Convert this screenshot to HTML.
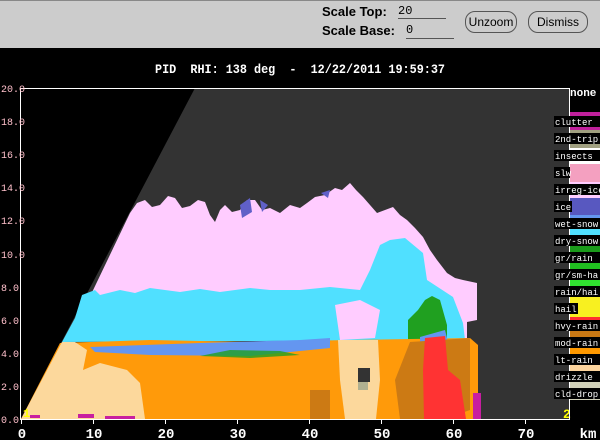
<!DOCTYPE html><html><head><style>
html,body{margin:0;padding:0;background:#000;width:600px;height:440px;overflow:hidden}
.tb{position:absolute;left:0;top:0;width:600px;height:47px;background:#cccccc;border-top:1px solid #888}
.lbl{position:absolute;font:bold 13px "Liberation Sans",sans-serif;color:#000}
.in{position:absolute;font:12px "Liberation Mono",monospace;color:#000;border-bottom:1px solid #555}
.btn{position:absolute;top:10px;height:20px;border:1px solid #555;border-radius:10px;font:12px "Liberation Sans",sans-serif;line-height:20px;text-align:center;background:#ccc}
</style></head><body>
<div class="tb">
<div class="lbl" style="left:322px;top:3px">Scale Top:</div>
<div class="in" style="left:398px;top:3px;width:48px;height:14px">20</div>
<div class="lbl" style="left:322px;top:22px">Scale Base:</div>
<div class="in" style="left:406px;top:22px;width:48px;height:15px">0</div>
<div class="btn" style="left:465px;width:50px">Unzoom</div>
<div class="btn" style="left:528px;width:58px">Dismiss</div>
</div>
<svg width="600" height="440" style="position:absolute;left:0;top:0" xmlns="http://www.w3.org/2000/svg">
<text x="155" y="73" fill="#fff" font-family="Liberation Mono,monospace" font-weight="bold" font-size="13" xml:space="preserve" textLength="290" lengthAdjust="spacingAndGlyphs">PID  RHI: 138 deg  -  12/22/2011 19:59:37</text>
<polygon points="195,88 569,88 569,419 21,419" fill="#333"/>
<polygon points="130,213 137,203 145,200 152,207 160,205 168,196 175,198 182,208 190,206 198,200 205,202 210,215 215,222 220,210 225,205 232,212 240,210 247,200 255,200 262,210 270,208 280,213 290,205 300,208 307,203 315,197 325,195 335,188 342,190 350,183 356,190 363,197 370,205 377,213 385,210 393,207 400,215 407,220 415,228 423,237 430,250 437,260 447,273 455,278 463,280 477,283 477,320 467,322 467,340 80,340 74,330" fill="#ffccff"/>
<polygon points="240,205 250,198 252,212 242,218" fill="#6060c8"/>
<polygon points="260,200 268,205 262,212" fill="#6060c8"/>
<polygon points="321,193 330,190 328,198" fill="#6060c8"/>
<polygon points="82,295 95,290 100,295 120,290 135,293 150,288 180,292 200,289 220,292 250,288 270,290 300,290 330,287 360,290 370,270 380,245 390,240 405,238 423,253 427,280 453,297 463,323 465,340 62,342 75,318" fill="#50e0ff"/>
<polygon points="335,305 360,300 380,310 375,338 340,340" fill="#ffccff"/>
<polygon points="408,320 418,310 425,300 432,296 440,300 447,325 447,340 408,342" fill="#20a020"/>
<polygon points="60,343 150,340 250,342 350,340 470,338 478,345 478,419 21,419" fill="#ff9a0a"/>
<polygon points="90,347 200,343 300,340 330,338 330,348 250,356 150,355 95,352" fill="#6496f0"/>
<polygon points="420,337 445,330 448,342 420,345" fill="#6496f0"/>
<polygon points="200,356 230,350 280,351 300,355 250,358" fill="#1fa01f" opacity=".8"/>
<polygon points="62,342 75,342 87,350 83,370 100,363 127,370 140,383 145,419 21,419" fill="#fcd89c"/>
<polygon points="338,340 378,340 380,380 376,419 345,419 340,380" fill="#fcd89c"/>
<rect x="358" y="368" width="12" height="14" fill="#333"/>
<rect x="358" y="382" width="10" height="8" fill="#b0b090"/>
<polygon points="410,342 470,338 470,410 445,419 400,419 395,380" fill="#cc7a14"/>
<rect x="310" y="390" width="20" height="29" fill="#cc7a14"/>
<polygon points="425,338 445,336 448,370 460,380 466,419 424,419 423,370" fill="#ff3333"/>
<rect x="473" y="393" width="8" height="26" fill="#c81ea0"/>
<rect x="30" y="415" width="10" height="3" fill="#c81ea0"/>
<rect x="78" y="414" width="16" height="4" fill="#c81ea0"/>
<rect x="105" y="416" width="30" height="3" fill="#c81ea0"/>
<text x="23" y="417" fill="#ff0" font-family="Liberation Mono,monospace" font-size="12" font-weight="bold">1</text>
<text x="563" y="418" fill="#ff0" font-family="Liberation Mono,monospace" font-size="13" font-weight="bold">2</text>
<line x1="21" y1="88.5" x2="569" y2="88.5" stroke="#fff"/>
<line x1="20.5" y1="88" x2="20.5" y2="420" stroke="#fff"/>
<line x1="569.5" y1="88" x2="569.5" y2="420" stroke="#fff"/>
<line x1="20" y1="419.5" x2="570" y2="419.5" stroke="#fff"/>
<g stroke="#fff"><line x1="21.5" y1="419" x2="21.5" y2="424"/><line x1="93.5" y1="419" x2="93.5" y2="424"/><line x1="165.5" y1="419" x2="165.5" y2="424"/><line x1="237.5" y1="419" x2="237.5" y2="424"/><line x1="309.5" y1="419" x2="309.5" y2="424"/><line x1="381.5" y1="419" x2="381.5" y2="424"/><line x1="453.5" y1="419" x2="453.5" y2="424"/><line x1="525.5" y1="419" x2="525.5" y2="424"/></g>
<g fill="#fff" font-family="Liberation Mono,monospace" font-weight="bold" font-size="14" text-anchor="middle">
<text x="22" y="438">0</text><text x="94" y="438">10</text><text x="166" y="438">20</text><text x="238" y="438">30</text><text x="310" y="438">40</text><text x="382" y="438">50</text><text x="454" y="438">60</text><text x="526" y="438">70</text><text x="588" y="438">km</text></g>
<g fill="#ffc0cb" font-family="Liberation Mono,monospace" font-size="10">
<text x="1" y="92">20.0</text><text x="1" y="125">18.0</text><text x="1" y="158">16.0</text><text x="1" y="191">14.0</text><text x="1" y="224">12.0</text><text x="1" y="258">10.0</text><text x="1" y="291">8.0</text><text x="1" y="324">6.0</text><text x="1" y="357">4.0</text><text x="1" y="390">2.0</text><text x="1" y="423">0.0</text></g>
<rect x="570" y="112" width="30" height="18" fill="#c0209c"/>
<rect x="570" y="130" width="30" height="18" fill="#a0a080"/>
<rect x="570" y="148" width="30" height="16" fill="#fff"/>
<rect x="570" y="164" width="30" height="18" fill="#f4a0c0"/>
<rect x="570" y="182" width="30" height="16" fill="#ffccff"/>
<rect x="570" y="198" width="30" height="17" fill="#5858c0"/>
<rect x="570" y="215" width="30" height="14" fill="#6496f0"/>
<rect x="570" y="229" width="30" height="16" fill="#50e0ff"/>
<rect x="570" y="245" width="30" height="17" fill="#1a9a1a"/>
<rect x="570" y="262" width="30" height="18" fill="#20c020"/>
<rect x="570" y="280" width="30" height="15" fill="#30e030"/>
<rect x="570" y="295" width="30" height="22" fill="#f8f020"/>
<rect x="570" y="317" width="30" height="13" fill="#ff3030"/>
<rect x="570" y="330" width="30" height="15" fill="#c87814"/>
<rect x="570" y="345" width="30" height="17" fill="#ff9900"/>
<rect x="570" y="362" width="30" height="18" fill="#fcd39c"/>
<rect x="570" y="380" width="30" height="20" fill="#d0d0b8"/>
<text x="570" y="96" fill="#fff" font-family="Liberation Mono,monospace" font-weight="bold" font-size="11">none</text>
<g font-family="Liberation Mono,monospace" font-size="9" fill="#fff">
<g fill="#000"><rect x="554" y="116" width="46" height="11"/><rect x="554" y="133" width="46" height="11"/><rect x="554" y="150" width="46" height="11"/><rect x="554" y="167" width="16" height="11"/><rect x="554" y="184" width="46" height="11"/><rect x="554" y="201" width="18" height="11"/><rect x="554" y="218" width="46" height="11"/><rect x="554" y="235" width="46" height="11"/><rect x="554" y="252" width="46" height="11"/><rect x="554" y="269" width="46" height="11"/><rect x="554" y="286" width="46" height="11"/><rect x="554" y="303" width="24" height="11"/><rect x="554" y="320" width="46" height="11"/><rect x="554" y="337" width="46" height="11"/><rect x="554" y="354" width="46" height="11"/><rect x="554" y="371" width="46" height="11"/><rect x="554" y="388" width="46" height="11"/></g>
<text x="555" y="125">clutter</text><text x="555" y="142">2nd-trip</text><text x="555" y="159">insects</text><text x="555" y="176">slw</text><text x="555" y="193">irreg-ice</text><text x="555" y="210">ice</text><text x="555" y="227">wet-snow</text><text x="555" y="244">dry-snow</text><text x="555" y="261">gr/rain</text><text x="555" y="278">gr/sm-ha</text><text x="555" y="295">rain/hai</text><text x="555" y="312">hail</text><text x="555" y="329">hvy-rain</text><text x="555" y="346">mod-rain</text><text x="555" y="363">lt-rain</text><text x="555" y="380">drizzle</text><text x="555" y="397">cld-drop</text></g>
</svg>
</body></html>
